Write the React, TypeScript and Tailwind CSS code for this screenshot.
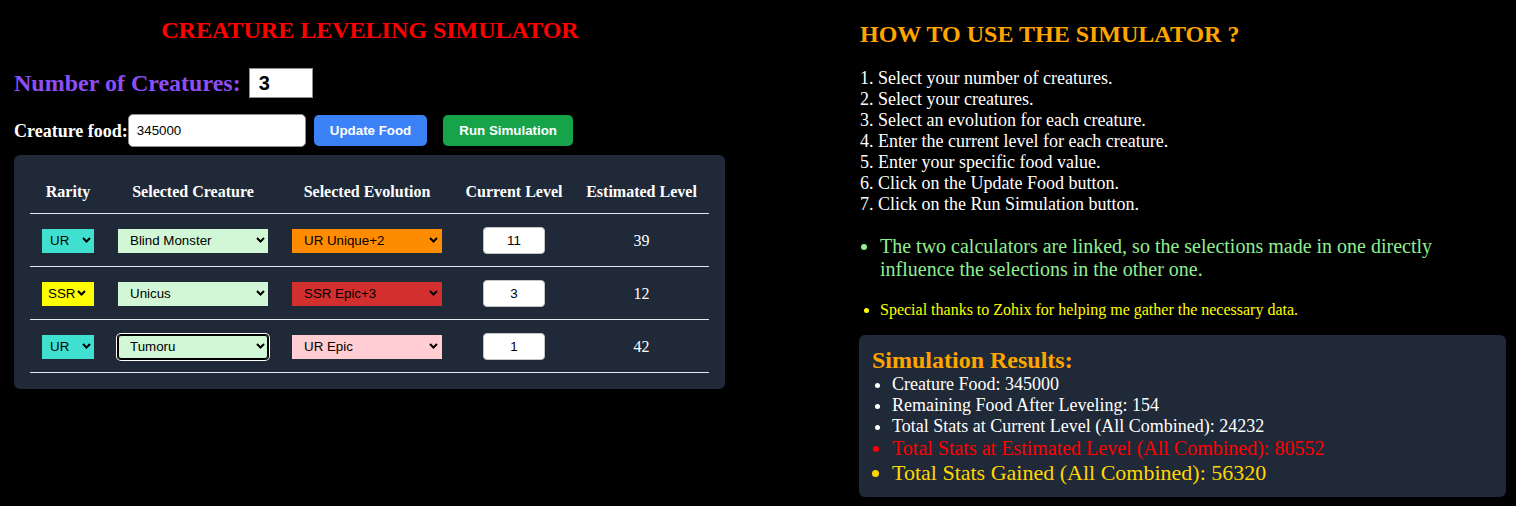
import React from "react";

type Row = {
  rarity: string;
  rarityBg: string;
  creature: string;
  evolution: string;
  evolutionBg: string;
  level: string;
  estimated: number;
  focused?: boolean;
};

const rows: Row[] = [
  {
    rarity: "UR",
    rarityBg: "bg-[#40e0d0]",
    creature: "Blind Monster",
    evolution: "UR Unique+2",
    evolutionBg: "bg-[#ff8c00]",
    level: "11",
    estimated: 39,
  },
  {
    rarity: "SSR",
    rarityBg: "bg-[#ffff00]",
    creature: "Unicus",
    evolution: "SSR Epic+3",
    evolutionBg: "bg-[#d32f2f]",
    level: "3",
    estimated: 12,
  },
  {
    rarity: "UR",
    rarityBg: "bg-[#40e0d0]",
    creature: "Tumoru",
    evolution: "UR Epic",
    evolutionBg: "bg-[#ffcdd2]",
    level: "1",
    estimated: 42,
    focused: true,
  },
];

const steps = [
  "1. Select your number of creatures.",
  "2. Select your creatures.",
  "3. Select an evolution for each creature.",
  "4. Enter the current level for each creature.",
  "5. Enter your specific food value.",
  "6. Click on the Update Food button.",
  "7. Click on the Run Simulation button.",
];

function Chevron({ className }: { className: string }) {
  return (
    <svg
      width="9"
      height="6"
      viewBox="0 0 9 6"
      className={`pointer-events-none absolute top-1/2 -translate-y-1/2 ${className}`}
    >
      <path d="M1 1 L4.5 4.5 L8 1" fill="none" stroke="#000" strokeWidth="2" />
    </svg>
  );
}

function FakeSelect({
  value,
  className,
  chevron = "right-[4px]",
}: {
  value: string;
  className: string;
  chevron?: string;
}) {
  return (
    <div className="relative">
      <select
        defaultValue={value}
        className={`appearance-none h-[24px] text-[13.33px] text-black font-['Liberation_Sans',Arial,sans-serif] outline-none ${className}`}
      >
        <option>{value}</option>
      </select>
      <Chevron className={chevron} />
    </div>
  );
}

export default function App() {
  return (
    <div className="min-h-screen w-full bg-black text-white font-['Liberation_Serif','Times_New_Roman',serif] flex">
      {/* left: calculator */}
      <div className="w-[740px] shrink-0 flex flex-col">
        <h1 className="pt-[16px] text-center text-[24px] leading-[28px] font-bold text-[#ff0000]">
          CREATURE LEVELING SIMULATOR
        </h1>

        <div className="mt-[24px] pl-[14px] flex items-center gap-[8px]">
          <span className="text-[24px] font-bold text-[#8b4ff5] leading-none">
            Number of Creatures:
          </span>
          <input
            defaultValue="3"
            className="w-[64px] h-[30px] bg-white border border-[#8f8f8f] pl-[9px] text-[20px] font-bold text-black font-['Liberation_Sans',Arial,sans-serif]"
          />
        </div>

        <div className="mt-[16px] pl-[14px] flex items-center">
          <span className="text-[18px] font-bold leading-none">Creature food:</span>
          <input
            defaultValue="345000"
            className="w-[178px] h-[33px] bg-white border border-[#8f8f8f] rounded-[5px] pl-[8px] text-[13.33px] text-black font-['Liberation_Sans',Arial,sans-serif]"
          />
          <button className="ml-[8px] h-[31px] px-[16px] rounded-[5px] bg-[#3b82f6] text-white text-[13.33px] font-bold font-['Liberation_Sans',Arial,sans-serif]">
            Update Food
          </button>
          <button className="ml-[16px] h-[31px] px-[16px] rounded-[5px] bg-[#16a34a] text-white text-[13.33px] font-bold font-['Liberation_Sans',Arial,sans-serif]">
            Run Simulation
          </button>
        </div>

        <div className="mt-[8px] ml-[14px] w-[711px] bg-[#1f2937] rounded-[6px] p-4">
          <div className="grid grid-cols-[76px_174px_174px_120px_135px] h-[43px] items-center border-b border-[#e5e7eb] text-[16px] font-bold text-center">
            <div>Rarity</div>
            <div>Selected Creature</div>
            <div>Selected Evolution</div>
            <div>Current Level</div>
            <div>Estimated Level</div>
          </div>
          {rows.map((row, i) => (
            <div
              key={i}
              className="grid grid-cols-[76px_174px_174px_120px_135px] h-[53px] items-center border-b border-[#e5e7eb] text-center"
            >
              <div className="flex justify-center">
                <FakeSelect
                  value={row.rarity}
                  className={`w-[52px] ${row.rarity === "SSR" ? "pl-[6px]" : "pl-[8px]"} ${row.rarityBg}`}
                  chevron={row.rarity === "SSR" ? "right-[8px]" : "right-[3px]"}
                />
              </div>
              <div className="flex justify-center">
                <FakeSelect
                  value={row.creature}
                  className={`w-[150px] pl-[12px] bg-[#d1f7d7] ${
                    row.focused
                      ? "rounded-[3px] shadow-[inset_0_0_0_1px_#000,0_0_0_1px_#000,0_0_0_2px_#fff]"
                      : ""
                  }`}
                  chevron="right-[3px]"
                />
              </div>
              <div className="flex justify-center">
                <FakeSelect
                  value={row.evolution}
                  className={`w-[150px] pl-[12px] ${row.evolutionBg}`}
                />
              </div>
              <div className="flex justify-center">
                <input
                  defaultValue={row.level}
                  className="w-[62px] h-[27px] bg-white border border-[#c4c4c4] rounded-[4px] text-center text-[13.33px] text-black font-['Liberation_Sans',Arial,sans-serif]"
                />
              </div>
              <div className="text-[16px] pt-[1px]">{row.estimated}</div>
            </div>
          ))}
        </div>
      </div>

      {/* right: instructions and results */}
      <div className="ml-[119px] w-[647px] shrink-0 flex flex-col">
        <h2 className="pt-[20px] pl-[1px] text-[24px] leading-[28px] font-bold text-[#ffa500]">
          HOW TO USE THE SIMULATOR ?
        </h2>

        <div className="mt-[20px] pl-[1px] text-[18px] leading-[21px]">
          {steps.map((s) => (
            <div key={s}>{s}</div>
          ))}
        </div>

        <ul className="mt-[20px] pl-[21px] list-disc text-[20px] leading-[23px] text-[#90ee90] pr-[60px]">
          <li>
            The two calculators are linked, so the selections made in one directly influence
            the selections in the other one.
          </li>
        </ul>

        <ul className="mt-[20px] pl-[21px] list-disc text-[16px] leading-[18px] text-[#ffff00]">
          <li>Special thanks to Zohix for helping me gather the necessary data.</li>
        </ul>

        <div className="mt-[16px] bg-[#1f2937] rounded-[6px] pl-[13px] pt-[11px] pb-[12px]">
          <h3 className="text-[24px] leading-[28px] font-bold text-[#ffa500]">
            Simulation Results:
          </h3>
          <ul className="pl-5 list-disc">
            <li className="text-[18px] leading-[21px]">Creature Food: 345000</li>
            <li className="text-[18px] leading-[21px]">Remaining Food After Leveling: 154</li>
            <li className="text-[18px] leading-[21px]">
              Total Stats at Current Level (All Combined): 24232
            </li>
            <li className="text-[20px] leading-[23px] text-[#ff0000]">
              Total Stats at Estimated Level (All Combined): 80552
            </li>
            <li className="text-[22px] leading-[25px] text-[#ffd700]">
              Total Stats Gained (All Combined): 56320
            </li>
          </ul>
        </div>
      </div>
    </div>
  );
}
